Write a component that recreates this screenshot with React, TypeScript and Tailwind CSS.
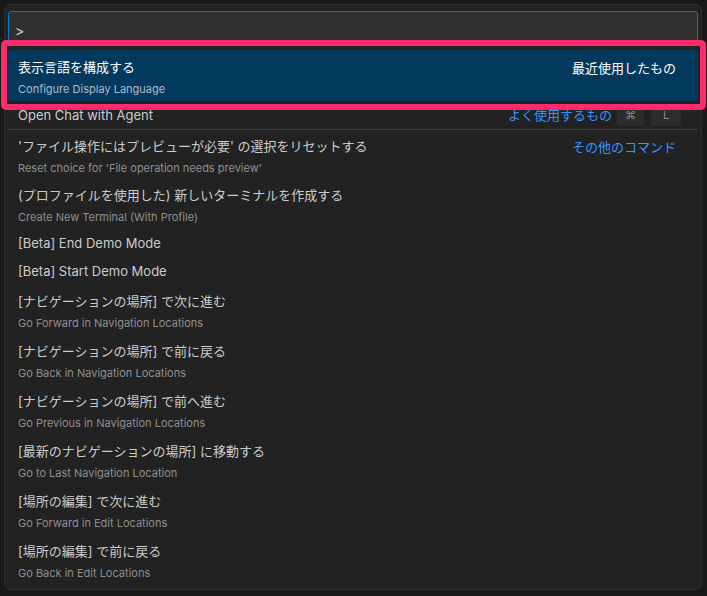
import React from "react";

const jp = { fontFamily: 'Inter, "Noto Sans CJK JP", sans-serif' };

type Item = {
  title: string;
  sub?: string;
  right?: "recent" | "often" | "other";
  sepTop?: boolean;
};

const items: Item[] = [
  { title: "'ファイル操作にはプレビューが必要' の選択をリセットする", sub: "Reset choice for 'File operation needs preview'", right: "other", sepTop: true },
  { title: "(プロファイルを使用した) 新しいターミナルを作成する", sub: "Create New Terminal (With Profile)" },
  { title: "[Beta] End Demo Mode" },
  { title: "[Beta] Start Demo Mode" },
  { title: "[ナビゲーションの場所] で次に進む", sub: "Go Forward in Navigation Locations" },
  { title: "[ナビゲーションの場所] で前に戻る", sub: "Go Back in Navigation Locations" },
  { title: "[ナビゲーションの場所] で前へ進む", sub: "Go Previous in Navigation Locations" },
  { title: "[最新のナビゲーションの場所] に移動する", sub: "Go to Last Navigation Location" },
  { title: "[場所の編集] で次に進む", sub: "Go Forward in Edit Locations" },
  { title: "[場所の編集] で前に戻る", sub: "Go Back in Edit Locations" },
];

function Row({ item }: { item: Item }) {
  if (!item.sub) {
    return (
      <div className="h-[28px] flex items-center pl-[10px] pr-[22px]">
        <span className="text-[13px] leading-[18px] text-[#cccccc]">{item.title}</span>
      </div>
    );
  }
  return (
    <div className={`h-[50px] flex justify-between pl-[10px] pr-[22px] ${item.sepTop ? "border-t border-[#3c3c3c]" : ""}`}>
      <div className="flex flex-col pt-[7px]">
        <span className="text-[13px] leading-[18px] text-[#cccccc]">{item.title}</span>
        <span className="mt-[5px] text-[11px] leading-[16px] text-[#8f8f8f]">{item.sub}</span>
      </div>
      {item.right === "other" && (
        <span className="pt-[8px] text-[13px] leading-[18px] text-[#3794ff]">その他のコマンド</span>
      )}
    </div>
  );
}

export default function App() {
  return (
    <div className="w-[707px] h-[596px] bg-[#181818] pt-1 pl-1 overflow-hidden relative" style={jp}>
      <div className="w-[698px] h-[586px] bg-[#222222] border border-[#2e2e2e] rounded-md px-[3px] pt-[6px]">
        {/* input */}
        <div className="h-[31px] border border-[#0078d4] rounded-[3px] bg-[#2f2f2f] pl-[6px] pt-[6px]">
          <span className="text-[14px] leading-[16px] text-[#cccccc]">&gt;</span>
        </div>

        <div className="mt-[8px]">
          {/* selected */}
          <div className="h-[51px] bg-[#04395e] rounded-[3px] flex justify-between pl-[10px] pr-[22px]">
            <div className="flex flex-col pt-[8px]">
              <span className="text-[13px] leading-[18px] text-white">表示言語を構成する</span>
              <span className="mt-[5px] text-[11px] leading-[16px] text-[#a9bccb]">Configure Display Language</span>
            </div>
            <span className="pt-[9px] text-[13px] leading-[18px] text-white">最近使用したもの</span>
          </div>

          {/* open chat */}
          <div className="h-[28px] flex items-center justify-between pl-[10px] pr-[17px]">
            <span className="text-[13px] leading-[18px] text-[#cccccc]">Open Chat with Agent</span>
            <div className="flex items-center">
              <span className="text-[13px] leading-[18px] text-[#3794ff]">よく使用するもの</span>
              <span className="ml-[5px] w-[27px] h-[21px] bg-[#2c2c2c] rounded-[3px] flex items-center justify-center text-[11px] text-[#8b8b8b]">⌘</span>
              <span className="ml-[7px] w-[30px] h-[21px] bg-[#2c2c2c] rounded-[3px] flex items-center justify-center text-[11px] text-[#8b8b8b]">L</span>
            </div>
          </div>

          {items.map((it, i) => (
            <Row key={i} item={it} />
          ))}
        </div>
      </div>

      {/* annotation */}
      <div className="absolute left-[1px] top-[40px] w-[705px] h-[70px] border-[6px] border-[#fb2c6c] rounded-[5px] pointer-events-none" />
    </div>
  );
}
